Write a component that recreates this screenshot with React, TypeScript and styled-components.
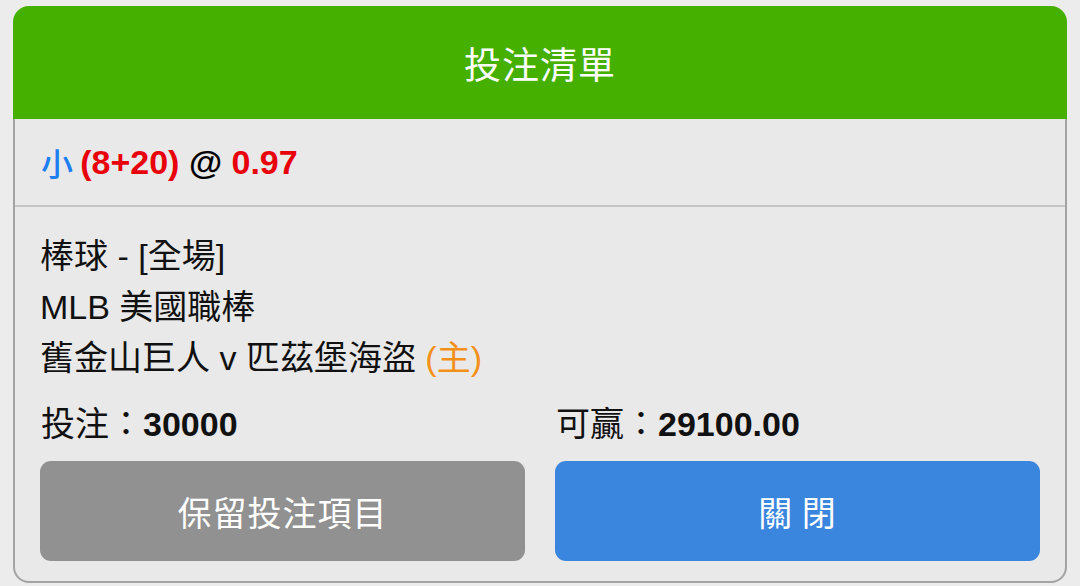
import React from "react";
import styled, { createGlobalStyle } from "styled-components";

const Global = createGlobalStyle`
  html, body { margin: 0; padding: 0; background: #ececec; }
  body { font-family: "Liberation Sans", "Noto Sans CJK TC", sans-serif; }
`;

const Card = styled.div`
  margin: 6px 13px 0 13px;
  width: 1054px;
  display: flex;
  flex-direction: column;
`;

const Header = styled.div`
  height: 113px;
  background: #45b000;
  border-radius: 16px 16px 0 0;
  display: flex;
  align-items: center;
  justify-content: center;
  color: #fff;
  font-size: 37px;
  font-family: "Noto Sans CJK TC", sans-serif;
  letter-spacing: 1px;
`;

const Body = styled.div`
  background: #e9e9e9;
  border: 2px solid #a3a3a3;
  border-top: none;
  border-radius: 0 0 16px 16px;
  display: flex;
  flex-direction: column;
`;

const Selection = styled.div`
  height: 88px;
  border-bottom: 2px solid #c6c6c6;
  display: flex;
  align-items: center;
  padding-left: 26px;
  box-sizing: border-box;
  font-size: 34px;
  font-weight: bold;
`;

const Tone = styled.span<{ $c: string; $cjk?: boolean }>`
  color: ${(p) => p.$c};
  font-weight: bold;
  ${(p) => (p.$cjk ? 'font-family: "Noto Sans CJK TC", sans-serif; font-size: 32px; font-weight: 500;' : "")}
  white-space: pre;
`;

const Details = styled.div`
  padding: 24px 25px 20px 25px;
  display: flex;
  flex-direction: column;
`;

const Line = styled.div`
  font-size: 34px;
  line-height: 51px;
  color: #111;
  white-space: pre;
`;

const Home = styled.span`
  color: #f39019;
`;

const Grid = styled.div`
  display: grid;
  grid-template-columns: 485px 485px;
  column-gap: 30px;
  margin-top: 20px;
`;

const Stat = styled.div`
  font-size: 34px;
  line-height: 40px;
  color: #111;
  padding-left: 1px;
  height: 40px;
`;

const Num = styled.span`
  font-weight: bold;
`;

const Btn = styled.div<{ $bg: string }>`
  margin-top: 17px;
  height: 100px;
  border-radius: 11px;
  background: ${(p) => p.$bg};
  color: #fff;
  font-size: 34px;
  font-family: "Noto Sans CJK TC", sans-serif;
  display: flex;
  align-items: center;
  justify-content: center;
  letter-spacing: 1px;
`;

export default function App() {
  return (
    <>
      <Global />
      <Card>
        <Header>投注清單</Header>
        <Body>
          <Selection>
            <Tone $c="#1c7ef0" $cjk>小 </Tone>
            <Tone $c="#e8000b">(8+20) </Tone>
            <Tone $c="#000">@ </Tone>
            <Tone $c="#e8000b">0.97</Tone>
          </Selection>
          <Details>
            <Line>棒球 - [全場]</Line>
            <Line>MLB 美國職棒</Line>
            <Line>
              舊金山巨人 v 匹茲堡海盜 <Home>(主)</Home>
            </Line>
            <Grid>
              <Stat>
                投注：<Num>30000</Num>
              </Stat>
              <Stat>
                可贏：<Num>29100.00</Num>
              </Stat>
              <Btn $bg="#919191">保留投注項目</Btn>
              <Btn $bg="#3a86df">關 閉</Btn>
            </Grid>
          </Details>
        </Body>
      </Card>
    </>
  );
}
